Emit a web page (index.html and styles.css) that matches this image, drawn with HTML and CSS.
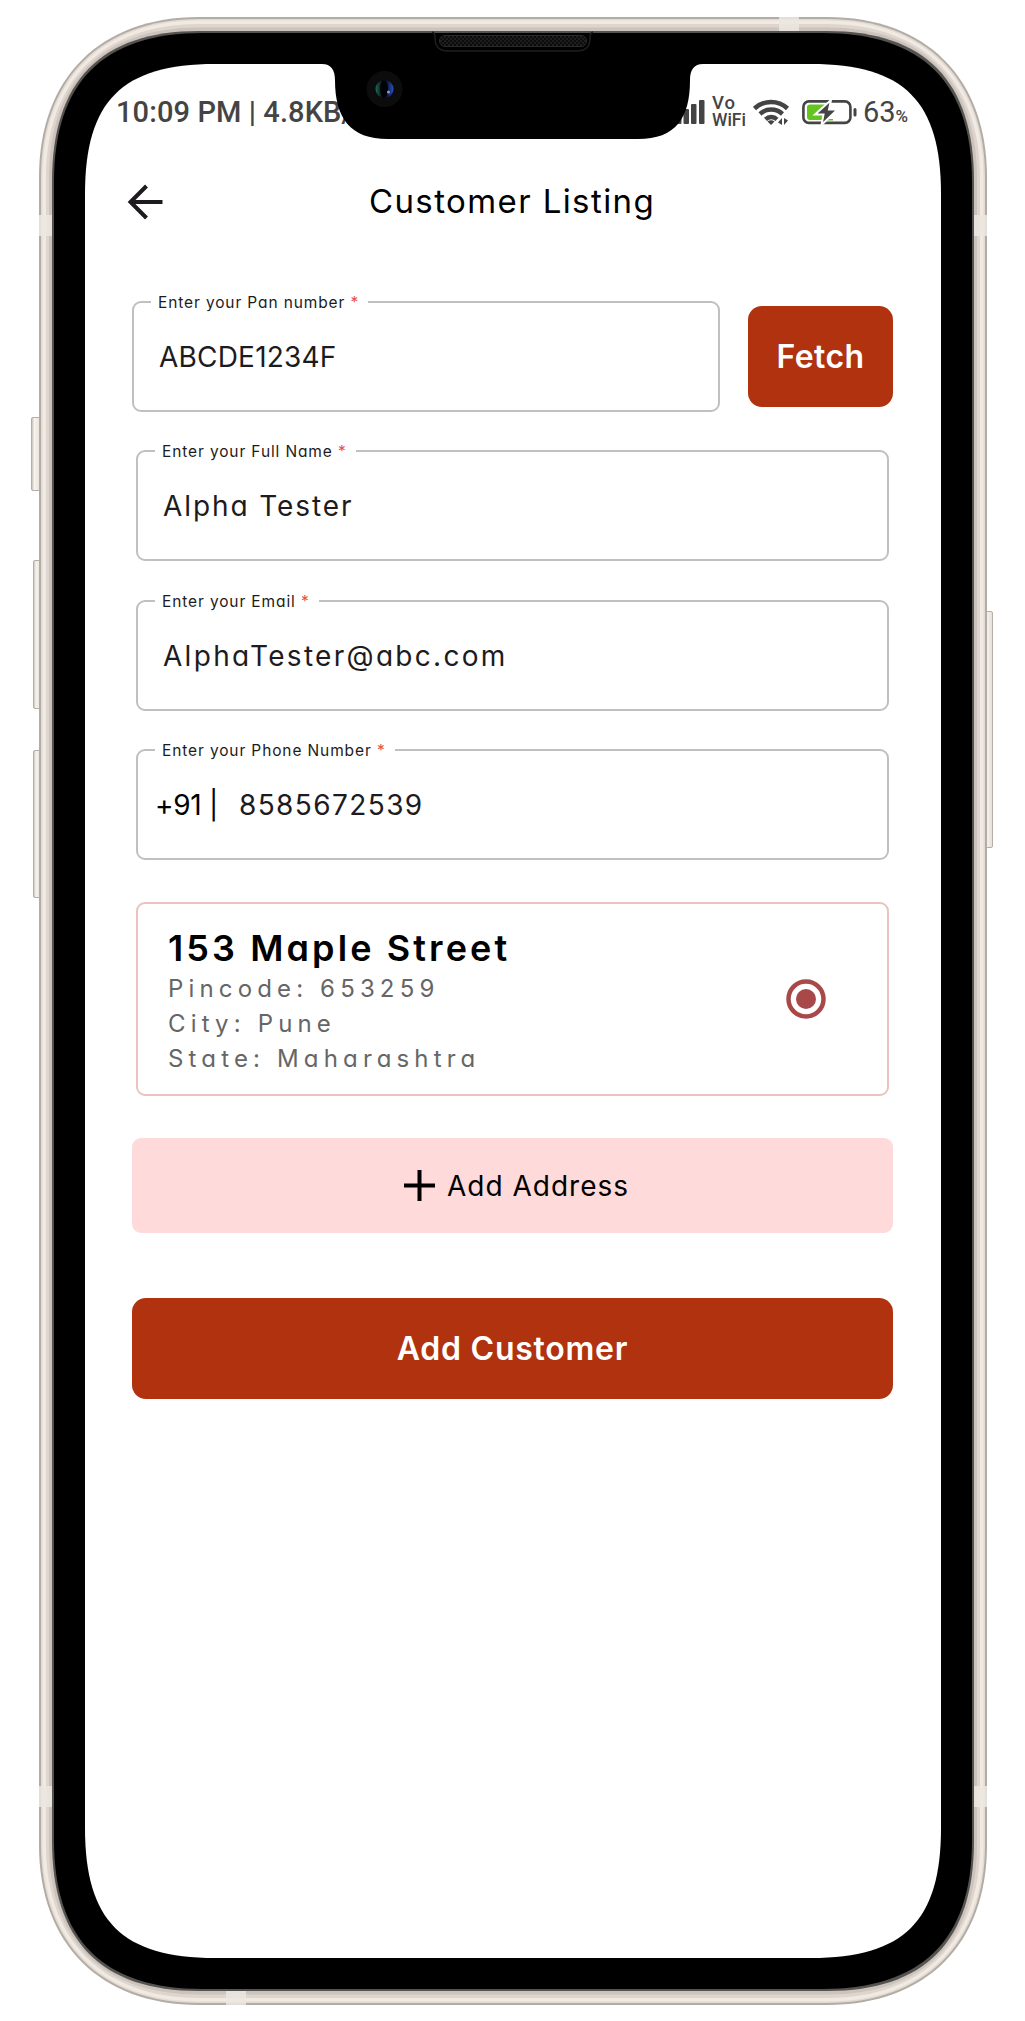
FILE: index.html
```
<!DOCTYPE html>
<html lang="en">
<head>
<meta charset="utf-8">
<title>Customer Listing</title>
<link rel="stylesheet" href="styles.css">
</head>
<body>
<div class="device">
  <svg class="frame" viewBox="0 0 1025 2021" aria-hidden="true">
    <defs>
      <linearGradient id="key" x1="0" x2="1"><stop offset="0" stop-color="#c2bbb3"/><stop offset=".3" stop-color="#f6f2ec"/><stop offset="1" stop-color="#e6ded7"/></linearGradient>
    </defs>
    <g fill="url(#key)" stroke="#b5aea6">
      <rect x="31.500" y="417.500" width="10" height="73" rx="1.500"/>
      <rect x="33.500" y="560.500" width="8" height="148" rx="1.500"/>
      <rect x="33.500" y="750.500" width="8" height="147" rx="1.500"/>
      <rect x="984" y="611.500" width="8.500" height="236" rx="1.500"/>
    </g>
    <path fill="#b3aca4" d="M39 177C39 78 100 17 199 17H827C926 17 987 78 987 177V1845C987 1944 926 2005 827 2005H199C100 2005 39 1944 39 1845Z"/>
    <path fill="#e2dbd4" d="M41 177C41 79 101 19 199 19H827C925 19 985 79 985 177V1845C985 1943 925 2003 827 2003H199C101 2003 41 1943 41 1845Z"/>
    <path fill="#f0eae3" d="M42.500 177C42.500 80 102 20.500 199 20.500H827C924 20.500 983.500 80 983.500 177V1845C983.500 1942 924 2001.500 827 2001.500H199C102 2001.500 42.500 1942 42.500 1845Z"/>
    <path fill="#ddd5ce" d="M46 177C46 81 103 24 199 24H827C923 24 980 81 980 177V1845C980 1941 923 1998 827 1998H199C103 1998 46 1941 46 1845Z"/>
    <path fill="#ccc3bd" d="M49 178C49 81 102 27.500 199 27.500H827C924 27.500 977 81 977 178V1844C977 1941 924 1994.500 827 1994.500H199C102 1994.500 49 1941 49 1844Z"/>
    <g fill="#ece8e1" opacity=".85">
      <rect x="39" y="215" width="14" height="21"/><rect x="973" y="215" width="14" height="21"/>
      <rect x="39" y="1786" width="14" height="21"/><rect x="973" y="1786" width="14" height="21"/>
      <rect x="779" y="17" width="20" height="14"/><rect x="226" y="1991" width="20" height="14"/>
    </g>
    <path fill="#55534f" d="M52 181C52 81 101 31 199 31H827C925 31 974 81 974 181V1841C974 1941 925 1991 827 1991H199C101 1991 52 1941 52 1841Z"/>
    <path fill="#000" d="M54 182C54 82 103 33 203 33H822C922 33 972 82 972 182V1840C972 1940 922 1989 822 1989H203C103 1989 54 1940 54 1840Z"/>
    <path fill="#fff" d="M85 194C85 101 122 64 215 64H811C904 64 941 101 941 194V1828C941 1921 904 1958 811 1958H215C122 1958 85 1921 85 1828Z"/>
  </svg>

  <main class="screen">
    <header class="status">
      <span class="clock">10:09 PM | 4.8KB/s</span>
      <div class="indicators">
        <svg class="signal" width="32" height="26" viewBox="0 0 32 26" fill="#444"><rect x="3" y="15" width="5.500" height="10" rx="1"/><rect x="10.500" y="10" width="5.500" height="15" rx="1"/><rect x="18" y="5" width="5.500" height="20" rx="1"/><rect x="26" y="1" width="5.500" height="24" rx="1"/></svg>
        <span class="vowifi"><span class="vo">Vo</span><span>WiFi</span></span>
        <svg class="wifi" width="37" height="28" viewBox="0 0 37 28" fill="none" stroke="#444" stroke-width="4.500"><path d="M1.500 10.500a24 24 0 0 1 33 0M7 16a16.500 16.500 0 0 1 22.500 0M12.500 21.300a8.500 8.500 0 0 1 11.500 0"/><path fill="#444" stroke="none" d="M14.500 23.500q3.500-2.500 7 0l-3.500 3.500zM25 24.500l4-4.500v7zM31 20v7l4-4.500z"/></svg>
        <svg class="battery" width="55" height="27" viewBox="0 0 55 27"><rect x="1.400" y="2.400" width="47" height="21.500" rx="5.500" fill="none" stroke="#444" stroke-width="2.600"/><rect x="5" y="5.500" width="20" height="15.500" rx="3" fill="#64c51f"/><path d="M25 20h6v1.500h-6z" fill="#64c51f"/><path d="M29 1L13 15.500h8.500L19.500 26 35.500 10.500H27z" fill="#444" stroke="#fff" stroke-width="2"/><rect x="51.500" y="9" width="3" height="8.500" rx="1.500" fill="#444"/></svg>
        <span class="level">63<small>%</small></span>
      </div>
    </header>

    <nav class="appbar">
      <svg class="back" width="36" height="36" viewBox="0 0 36 36" fill="none" stroke="#1d1b20" stroke-width="4"><path d="M35.500 18H4M19.500 2L3.500 18l16 16"/></svg>
      <h1>Customer Listing</h1>
    </nav>

    <form class="form">
      <div class="pan-row">
        <fieldset class="field"><legend>Enter your Pan number <i>*</i></legend><span class="value caps">ABCDE1234F</span></fieldset>
        <button type="button" class="btn fetch">Fetch</button>
      </div>
      <fieldset class="field inset"><legend>Enter your Full Name <i>*</i></legend><span class="value">Alpha Tester</span></fieldset>
      <fieldset class="field inset email"><legend>Enter your Email <i>*</i></legend><span class="value">AlphaTester@abc.com</span></fieldset>
      <fieldset class="field inset"><legend>Enter your Phone Number <i>*</i></legend><span class="prefix">+91 |</span><span class="value digits">8585672539</span></fieldset>

      <section class="address">
        <div>
          <h2>153 Maple Street</h2>
          <p>Pincode: 653259</p>
          <p>City: Pune</p>
          <p>State: Maharashtra</p>
        </div>
        <svg class="radio" width="40" height="40" viewBox="0 0 40 40"><circle cx="20" cy="20" r="17.500" fill="none" stroke="#a84848" stroke-width="4.500"/><circle cx="20" cy="20" r="10" fill="#a84848"/></svg>
      </section>

      <button type="button" class="add-address"><svg width="31" height="31" viewBox="0 0 31 31" stroke="#000" stroke-width="4"><path d="M15.500 0v31M0 15.500h31"/></svg><span>Add Address</span></button>
      <button type="button" class="btn submit">Add Customer</button>
    </form>
  </main>

  <svg class="notch" viewBox="0 0 1025 150" aria-hidden="true">
    <defs>
      <pattern id="mesh" width="4" height="4" patternUnits="userSpaceOnUse"><rect width="4" height="4" fill="#0c0c0c"/><circle cx="1" cy="1" r=".8" fill="#333"/><circle cx="3" cy="3" r=".8" fill="#333"/></pattern>
      <linearGradient id="lens"><stop offset="0" stop-color="#1f6d60"/><stop offset=".4" stop-color="#020508"/><stop offset=".6" stop-color="#06102c"/><stop offset="1" stop-color="#2a55c8"/></linearGradient>
    </defs>
    <path d="M322 60V64C331 64 335 70 335 80C335 118 350 139 388 139H638C676 139 690 118 690 80C690 70 694 64 703 64V60Z"/>
    <path d="M432 32q3 1 3 5v1q0 13 13 13h129q13 0 13-13v-1q0-4 3-5" fill="none" stroke="#1e1e1e" stroke-width="1.500"/>
    <rect x="439.500" y="35.500" width="147" height="11" rx="5.500" fill="url(#mesh)" stroke="#2a2a2a"/>
    <circle cx="384.500" cy="89" r="18" fill="#0c0c0c"/>
    <circle cx="384.500" cy="89" r="9" fill="url(#lens)"/>
    <ellipse cx="384" cy="89" rx="4" ry="8" fill="#010204"/>
    <circle cx="388.500" cy="92" r="1.500" fill="#a88bc8"/>
  </svg>
</div>
</body>
</html>
```
FILE: styles.css
```
* { box-sizing: border-box; }
body { margin: 0; background: #fff; font-family: Inter, "Open Sans", sans-serif; font-feature-settings: "cv11"; color: #1d1b20; }
h1, h2, p { margin: 0; font-weight: 400; }
button { border: 0; padding: 0; font: inherit; font-feature-settings: inherit; }
svg { display: block; flex: none; }

.device { position: relative; width: 1025px; height: 2021px; }
.frame, .notch { position: absolute; top: 0; left: 0; width: 1025px; }
.frame { height: 2021px; }
.notch { height: 150px; }
.screen { position: relative; width: 856px; margin-left: 85px; padding-top: 92px; }

.status { display: flex; align-items: center; height: 40px; padding: 0 32px 0 31px; font-family: Roboto, sans-serif; color: #444; white-space: nowrap; }
.clock { font-size: 29px; font-weight: 500; letter-spacing: .1px; }
.indicators { display: flex; align-items: center; margin-left: auto; }
.vowifi { display: flex; flex-direction: column; width: 35px; margin-left: 7px; font-size: 17.5px; font-weight: 500; line-height: 17.5px; }
.vo { font-size: 18.5px; letter-spacing: 1px; }
.wifi { margin-left: 6px; }
.battery { margin-left: 12px; }
.level { width: 46px; margin-left: 6px; font-size: 29px; }
.level small { font-size: 17px; font-weight: 500; }

.appbar { display: grid; grid-template-columns: 36px 1fr 36px; align-items: center; height: 60px; margin-top: 40px; padding: 0 44px 0 42px; }
.appbar h1 { padding-bottom: 2px; text-align: center; font-size: 33px; letter-spacing: 1.4px; color: #000; }

.form { display: flex; flex-direction: column; padding: 60px 48px 0 47px; }
.pan-row { display: flex; justify-content: space-between; }
.pan-row .field { width: 588px; }
.field { height: 120px; min-width: 0; margin: 0; padding: 0 0 0 17px; border: 2px solid #c0c0c0; border-radius: 9px; white-space: nowrap; }
.field legend { height: 20px; margin: 0; padding: 0 9px 0 7px; font-size: 15.5px; line-height: 22px; letter-spacing: .88px; }
.field legend i { color: #e8503f; font-style: normal; }
.value, .prefix { font-size: 28px; line-height: 90px; }
.value { margin-left: 8px; letter-spacing: 1.9px; }
.caps { letter-spacing: .2px; }
.email .value { letter-spacing: 2.3px; }
.digits { margin-left: 21px; letter-spacing: 1.4px; }
.prefix { letter-spacing: -.3px; color: #000; }
.inset { margin: 29px 4px 0; }
.inset.email { margin-top: 30px; }
.btn { background: #b0320e; color: #fff; border-radius: 14px; font-weight: 600; font-size: 32px; letter-spacing: .4px; }
.fetch { width: 145px; height: 101px; margin-top: 14px; }

.address { display: flex; justify-content: space-between; align-items: center; height: 194px; margin: 42px 4px 0; padding: 2px 61px 0 30px; border: 2px solid #e8c4bc; border-radius: 9px; color: #666; white-space: nowrap; }
.address h2 { font-size: 36px; font-weight: 600; line-height: 46px; letter-spacing: 3.1px; color: #000; }
.address p { font-size: 24px; line-height: 35px; letter-spacing: 5.15px; }
.radio { margin-bottom: 3px; }
.add-address { display: flex; justify-content: center; align-items: center; gap: 12px; height: 95px; margin-top: 42px; padding-left: 8px; border-radius: 9px; background: #fedada; color: #000; font-size: 28px; letter-spacing: 1px; }
.submit { height: 101px; margin-top: 65px; letter-spacing: .75px; }
```
